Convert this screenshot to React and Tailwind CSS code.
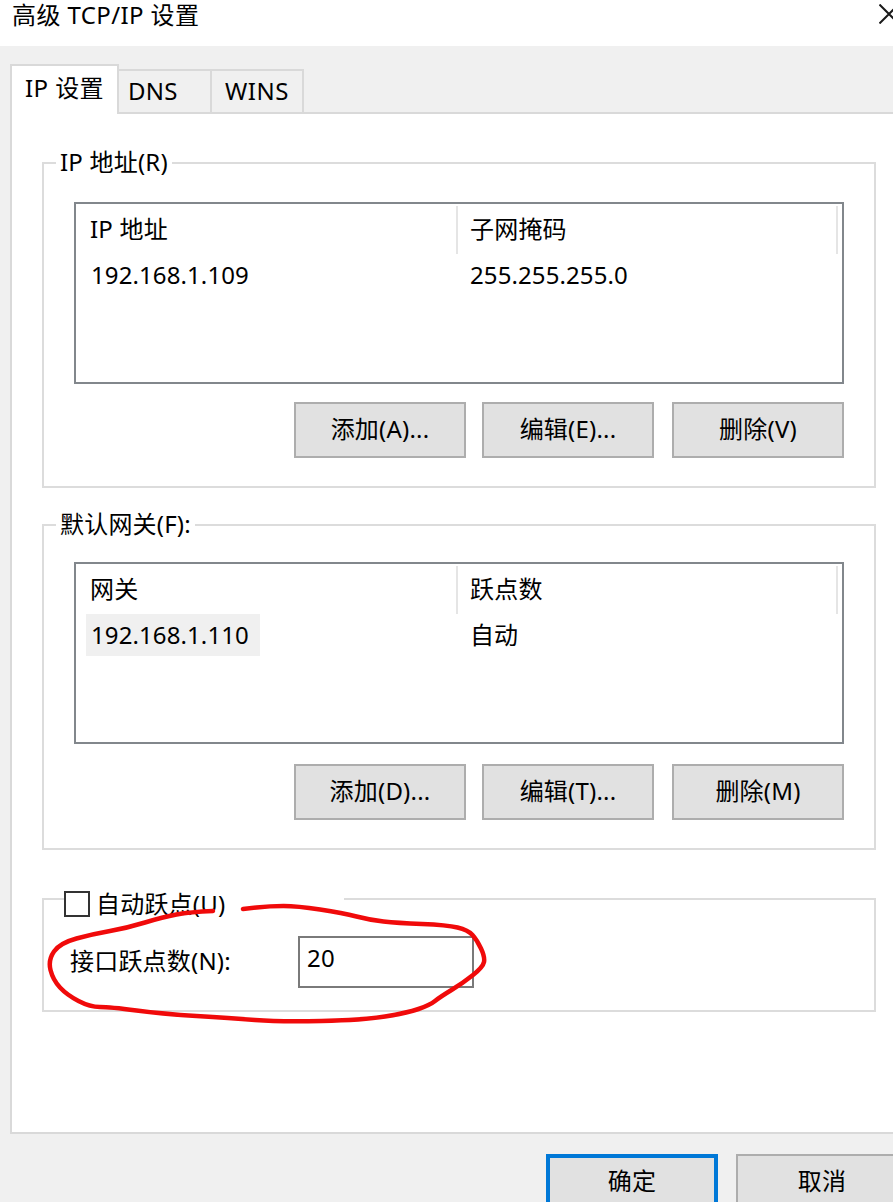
import React from "react";

// freehand red mark, points traced from the screenshot
const markPoints = [
  [213, 911], [190, 912], [163, 917], [127, 928], [93, 934], [60, 943], [48, 960], [53, 980],
  [67, 995], [90, 1007], [110, 1007], [163, 1014], [230, 1018], [280, 1022], [363, 1020],
  [407, 1013], [430, 1005], [440, 997], [463, 983], [483, 967], [485, 957], [477, 940],
  [468, 930], [447, 925], [397, 923], [370, 920], [343, 913], [297, 906], [270, 906], [243, 909],
];

const smoothPath = (pts) => {
  let d = `M${pts[0][0]} ${pts[0][1]}`;
  for (let i = 1; i < pts.length - 1; i++) {
    const mx = (pts[i][0] + pts[i + 1][0]) / 2;
    const my = (pts[i][1] + pts[i + 1][1]) / 2;
    d += ` Q${pts[i][0]} ${pts[i][1]} ${mx} ${my}`;
  }
  const last = pts[pts.length - 1];
  return `${d} L${last[0]} ${last[1]}`;
};

const WinButton = ({ children, className = "", primary }) => (
  <button
    className={`w-[172px] h-[56px] shrink-0 bg-[#e1e1e1] text-center pb-[2px] ${
      primary ? "border-4 border-[#0078d7]" : "border-2 border-[#adadad]"
    } ${className}`}
  >
    {children}
  </button>
);

const ListBox = ({ headers, row, selected }) => (
  <div className="h-[182px] border-2 border-[#82878c] bg-white pt-[2px]">
    <div className="flex h-[48px]">
      <div className="w-[380px] pl-[14px] pb-[2px] flex items-center">{headers[0]}</div>
      <div className="w-[2px] bg-[#e5e5e5]" />
      <div className="w-[378px] pl-[12px] pb-[2px] flex items-center">{headers[1]}</div>
      <div className="w-[2px] bg-[#e5e5e5]" />
    </div>
    <div className="flex h-[42px] tracking-[0.1px]">
      <div className="w-[382px] pl-[10px]">
        <div className={`h-full flex items-center pl-[5px] ${selected ? "w-[174px] bg-[#f0f0f0]" : ""}`}>{row[0]}</div>
      </div>
      <div className="pl-[12px] flex items-center">{row[1]}</div>
    </div>
  </div>
);

const Group = ({ legend, headers, row, selected, buttons, className, pt, btnTop, pb }) => (
  <fieldset className={`w-[834px] border-2 border-[#dcdcdc] ${className}`}>
    <legend className="ml-[12px] px-[4px] h-[32px] leading-[30px]">{legend}</legend>
    <div className={`px-[30px] ${pt} ${pb}`}>
      <ListBox headers={headers} row={row} selected={selected} />
      <div className={`flex justify-end ${btnTop}`}>
        <WinButton>{buttons[0]}</WinButton>
        <WinButton className="ml-[16px]">{buttons[1]}</WinButton>
        <WinButton className="ml-[18px]">{buttons[2]}</WinButton>
      </div>
    </div>
  </fieldset>
);

export default function App() {
  return (
    <div className="relative w-[893px] h-[1202px] overflow-hidden bg-[#f0f0f0] text-black text-[24px] tracking-[0.2px] font-['Noto_Sans','Noto_Sans_CJK_SC',sans-serif]">
      {/* Title bar */}
      <div className="h-[46px] bg-white flex justify-between items-start pl-[12px]">
        <div className="leading-[30px] tracking-[0.4px]">高级 TCP/IP 设置</div>
        <svg width="20" height="20" viewBox="0 0 20 20" className="mt-[4px] mr-[-6px] shrink-0">
          <path d="M0.5 0.5 L19.5 19.5 M19.5 0.5 L0.5 19.5" stroke="#1a1a1a" strokeWidth="2" fill="none" />
        </svg>
      </div>

      {/* Tabs */}
      <div className="flex items-end h-[48px] mt-[18px] ml-[10px]">
        <div className="relative z-10 w-[109px] h-[50px] mb-[-2px] bg-white border-2 border-b-0 border-[#d9d9d9] flex items-center justify-center pb-[4px] tracking-[0.4px]">
          IP 设置
        </div>
        <div className="w-[93px] h-[43px] border-t-2 border-r-2 border-[#d9d9d9] flex items-center pl-[9px] pb-[2px]">DNS</div>
        <div className="w-[92px] h-[43px] border-t-2 border-r-2 border-[#d9d9d9] pl-[13px] pb-[2px] flex items-center tracking-[0.5px]">WINS</div>
      </div>

      {/* Tab panel, runs past the right edge of the shot */}
      <div className="w-[900px] h-[1022px] ml-[10px] bg-white border-2 border-r-0 border-[#d9d9d9] pl-[30px] pt-[33px]">
        <Group
          legend="IP 地址(R)"
          headers={["IP 地址", "子网掩码"]}
          row={["192.168.1.109", "255.255.255.0"]}
          buttons={["添加(A)...", "编辑(E)...", "删除(V)"]}
          pt="pt-[23px]"
          btnTop="mt-[18px]"
          pb="pb-[28px]"
        />
        <Group
          legend="默认网关(F):"
          headers={["网关", "跃点数"]}
          row={["192.168.1.110", "自动"]}
          selected
          buttons={["添加(D)...", "编辑(T)...", "删除(M)"]}
          className="mt-[21px]"
          pt="pt-[21px]"
          btnTop="mt-[20px]"
          pb="pb-[28px]"
        />

        {/* Auto metric */}
        <fieldset className="w-[834px] mt-[31px] border-2 border-[#dcdcdc]">
          <legend className="ml-[20px] w-[280px] h-[36px] flex items-end">
            <span className="w-[26px] h-[26px] border-2 border-[#333333] bg-white shrink-0" />
            <span className="ml-[6px] leading-[26px]">自动跃点(U)</span>
          </legend>
          <div className="flex items-center pt-[19px] pb-[22px] pl-[26px]">
            <label className="w-[228px] pb-[2px]">接口跃点数(N):</label>
            <div className="w-[176px] h-[52px] border-2 border-[#7a7a7a] pl-[7px] pt-[4px] leading-8">20</div>
          </div>
        </fieldset>
      </div>

      {/* Dialog buttons */}
      <div className="flex pl-[546px] pt-[20px]">
        <WinButton primary>确定</WinButton>
        <WinButton className="ml-[18px]">取消</WinButton>
      </div>

      <svg className="absolute inset-0 pointer-events-none" width="893" height="1202" viewBox="0 0 893 1202">
        <path d={smoothPath(markPoints)} fill="none" stroke="#f00a0a" strokeWidth="4.5" strokeLinecap="round" strokeLinejoin="round" />
      </svg>
    </div>
  );
}
